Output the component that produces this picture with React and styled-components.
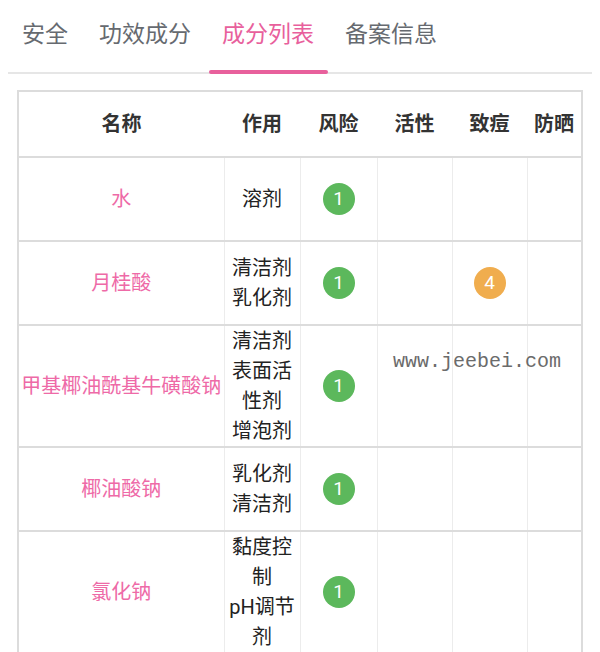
import React from "react";
import styled, { createGlobalStyle } from "styled-components";

const GlobalStyle = createGlobalStyle`
  body {
    margin: 0;
    background: #fff;
    font-family: Roboto, "Noto Sans CJK SC", sans-serif;
  }
`;

const tabs = ["安全", "功效成分", "成分列表", "备案信息"];

const rows = [
  { name: "水", use: ["溶剂"], risk: 1 },
  { name: "月桂酸", use: ["清洁剂", "乳化剂"], risk: 1, acne: 4 },
  { name: "甲基椰油酰基牛磺酸钠", use: ["清洁剂", "表面活性剂", "增泡剂"], risk: 1 },
  { name: "椰油酸钠", use: ["乳化剂", "清洁剂"], risk: 1 },
  { name: "氯化钠", use: ["黏度控制", "pH调节剂"], risk: 1 },
];

function App() {
  return (
    <Page>
      <GlobalStyle />
      <TabBar>
        {tabs.map((t) => (
          <Tab key={t} $active={t === "成分列表"}>
            {t}
          </Tab>
        ))}
      </TabBar>
      <TableWrap>
        <Table>
          <colgroup>
            <col style={{ width: 206 }} />
            <col style={{ width: 76 }} />
            <col style={{ width: 77 }} />
            <col style={{ width: 75 }} />
            <col style={{ width: 75 }} />
            <col />
          </colgroup>
          <thead>
            <tr>
              <Th>名称</Th>
              <Th>作用</Th>
              <Th>风险</Th>
              <Th>活性</Th>
              <Th>致痘</Th>
              <Th>防晒</Th>
            </tr>
          </thead>
          <tbody>
            {rows.map((r) => (
              <Row key={r.name}>
                <NameCell>{r.name}</NameCell>
                <UseCell>
                  {r.use.map((u) => (
                    <div key={u}>{u}</div>
                  ))}
                </UseCell>
                <Td>{r.risk && <Badge $color="#5cb85c">{r.risk}</Badge>}</Td>
                <Td />
                <Td>{r.acne && <Badge $color="#f0ad4e">{r.acne}</Badge>}</Td>
                <Td />
              </Row>
            ))}
          </tbody>
        </Table>
        <Watermark>www.jeebei.com</Watermark>
      </TableWrap>
    </Page>
  );
}

const Page = styled.div`
  width: 600px;
  height: 652px;
  overflow: hidden;
`;

const TabBar = styled.div`
  display: flex;
  gap: 7px;
  margin: 0 8px;
  padding-left: 2px;
  border-bottom: 2px solid #e6e6e6;
  height: 72px;
`;

const Tab = styled.div`
  position: relative;
  padding: 19px 12px 0;
  font-size: 23px;
  line-height: 32px;
  color: ${(p) => (p.$active ? "#e8609c" : "#666a70")};

  &::after {
    content: "";
    display: ${(p) => (p.$active ? "block" : "none")};
    position: absolute;
    left: -1px;
    right: -2px;
    bottom: -2px;
    height: 4px;
    border-radius: 2px;
    background: #e8609c;
  }
`;

const TableWrap = styled.div`
  position: relative;
  margin: 16px 0 0 17px;
  width: 566px;
`;

const Table = styled.table`
  width: 566px;
  table-layout: fixed;
  border-collapse: collapse;
  border: 2px solid #dcdcdc;
  font-size: 20px;
`;

const Th = styled.th`
  height: 60px;
  padding: 0 0 4px;
  font-weight: 700;
  color: #333;
  text-align: center;
  border-bottom: 2px solid #dcdcdc;
`;

const Row = styled.tr`
  height: 84px;
  border-bottom: 2px solid #dcdcdc;
`;

const Td = styled.td`
  padding: 0;
  text-align: center;
  vertical-align: middle;
  line-height: 30px;
  border-left: 1px solid #ececec;
  color: #333;
`;

const NameCell = styled(Td)`
  border-left: none;
  color: #ee6aa7;
  padding: 0 2px;
  white-space: nowrap;
`;

const UseCell = styled(Td)`
  padding: 0 2px;
  color: #222;
`;

const Badge = styled.span`
  display: inline-flex;
  align-items: center;
  justify-content: center;
  width: 32px;
  height: 32px;
  border-radius: 50%;
  background: ${(p) => p.$color};
  color: #fff;
  font-size: 19px;
  vertical-align: middle;
`;

const Watermark = styled.div`
  position: absolute;
  left: 376px;
  top: 260px;
  font-family: "Liberation Mono", "DejaVu Sans Mono", monospace;
  font-size: 20px;
  color: #6b6b6b;
  pointer-events: none;
`;

export default App;
